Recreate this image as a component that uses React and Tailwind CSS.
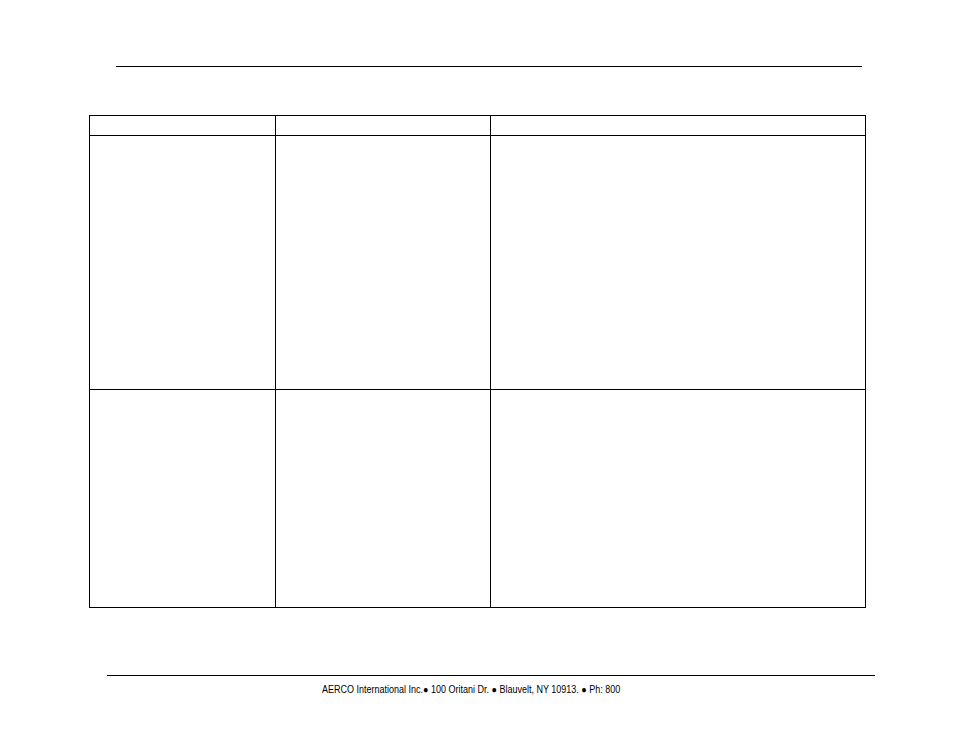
import React from "react";

const rows = [
  { h: "h-[254px]" },
  { h: "h-[218px]" },
];

function Cell({ className = "" }) {
  return <div className={"border-r border-b border-black " + className}></div>;
}

export default function App() {
  return (
    <div className="w-[954px] h-[738px] bg-white overflow-hidden pt-[66px]" style={{ fontFamily: '"Liberation Sans", Arial, sans-serif' }}>
      {/* page header rule */}
      <div className="ml-[116px] w-[746px] h-px bg-black"></div>

      {/* table */}
      <div className="ml-[89px] mt-[48px] w-[777px] border-l border-t border-black grid grid-cols-[186px_215px_375px]">
        <Cell className="h-[20px]" />
        <Cell className="h-[20px]" />
        <Cell className="h-[20px]" />
        {rows.map((r, i) => (
          <React.Fragment key={i}>
            <Cell className={r.h} />
            <Cell className={r.h} />
            <Cell className={r.h} />
          </React.Fragment>
        ))}
      </div>

      {/* footer */}
      <div className="ml-[107px] mt-[67px] w-[768px] h-px bg-black"></div>
      <div
        className="ml-[322px] mt-[8px] text-[10px] leading-[12px] text-black whitespace-nowrap origin-left scale-x-[0.9] w-fit"
        style={{ fontFamily: '"Liberation Sans Narrow", "Arial Narrow", "Liberation Sans", sans-serif' }}
      >
        AERCO International Inc.● 100 Oritani Dr. ● Blauvelt, NY 10913. ● Ph: 800
      </div>
    </div>
  );
}
